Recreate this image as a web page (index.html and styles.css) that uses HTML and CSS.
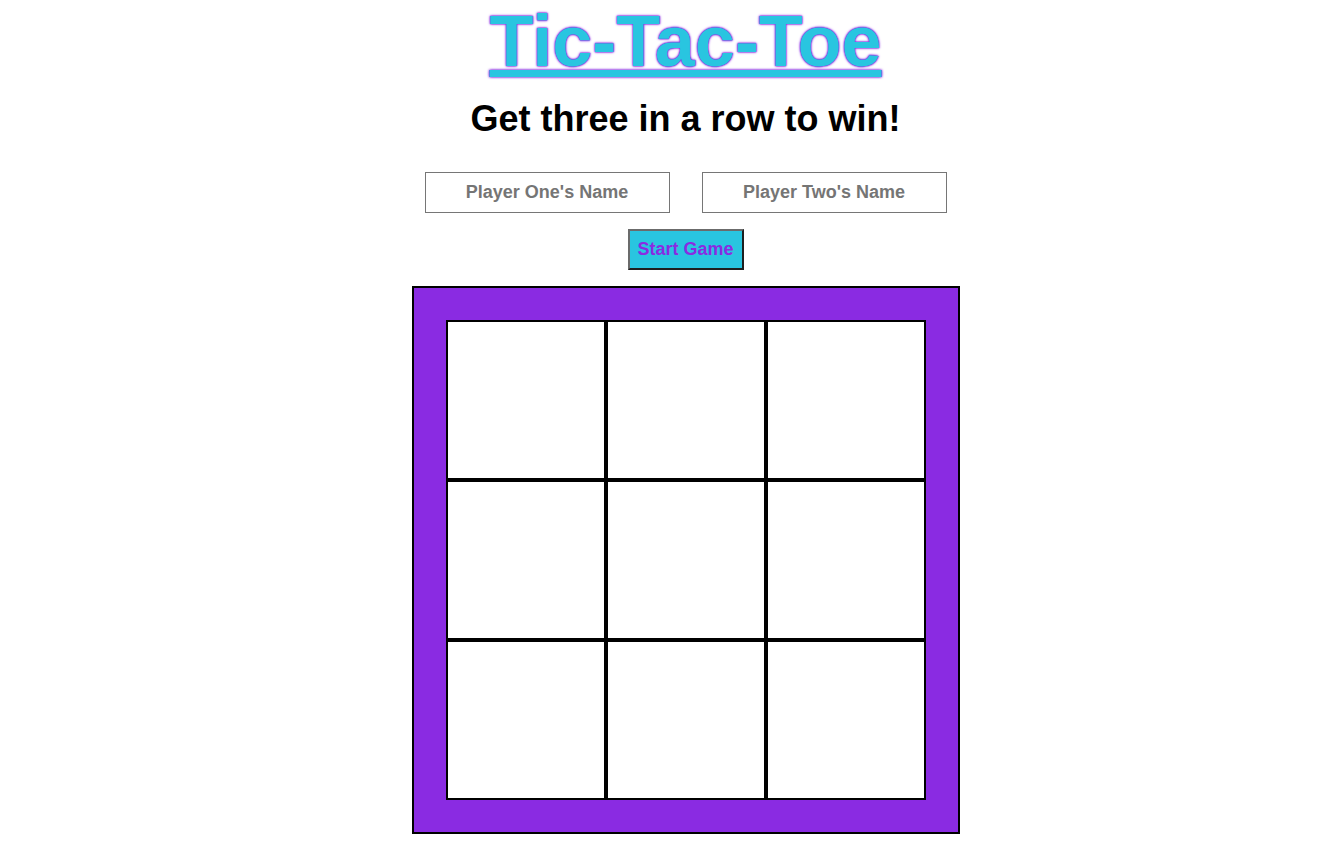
FILE: index.html
```html
<!DOCTYPE html>
<html lang="en">
<head>
<meta charset="utf-8">
<title>Tic-Tac-Toe</title>
<link rel="stylesheet" href="styles.css">
</head>
<body>
<main class="page">
  <h1 class="title">Tic-Tac-Toe</h1>
  <h2 class="subtitle">Get three in a row to win!</h2>
  <div class="players">
    <input class="name-input" type="text" placeholder="Player One's Name">
    <input class="name-input" type="text" placeholder="Player Two's Name">
  </div>
  <button class="start-btn" type="button">Start Game</button>
  <div class="board">
    <div class="grid">
      <div class="cell"></div>
      <div class="cell"></div>
      <div class="cell"></div>
      <div class="cell"></div>
      <div class="cell"></div>
      <div class="cell"></div>
      <div class="cell"></div>
      <div class="cell"></div>
      <div class="cell"></div>
    </div>
  </div>
</main>
</body>
</html>
```
FILE: styles.css
```css
html, body {
  margin: 0;
  padding: 0;
  background: #ffffff;
}

body {
  font-family: "Liberation Sans", Arial, sans-serif;
  padding-left: 47px;
}

.page {
  display: flex;
  flex-direction: column;
  align-items: center;
}

.title {
  margin: 0;
  font-size: 72px;
  font-weight: 700;
  color: #29c5e0;
  text-decoration: underline;
  text-shadow: 0 0 1px #8a2be2, 0 0 1px #8a2be2, 0 0 2px #8a2be2, 0 0 3px #8a2be2;
}

.subtitle {
  margin: 16px 0 0;
  font-size: 36px;
  font-weight: 700;
  color: #000000;
}

.players {
  display: flex;
  gap: 32px;
  margin-top: 32px;
}

.name-input {
  width: 245px;
  height: 41px;
  box-sizing: border-box;
  border: 1px solid #767676;
  border-radius: 0;
  padding: 0 8px;
  font-family: "Liberation Sans", Arial, sans-serif;
  font-size: 18px;
  font-weight: 700;
  text-align: center;
  color: #333333;
  background: #ffffff;
}

.name-input::placeholder {
  color: #757575;
  opacity: 1;
}

.start-btn {
  margin-top: 16px;
  width: 116px;
  height: 41px;
  box-sizing: border-box;
  padding: 0;
  border: 2px solid;
  border-color: #6b6b6b #1f1f1f #1f1f1f #6b6b6b;
  background: #29c5e0;
  color: #8a2be2;
  font-family: "Liberation Sans", Arial, sans-serif;
  font-size: 18px;
  font-weight: 700;
}

.board {
  margin-top: 16px;
  padding: 32px;
  border: 2px solid #000000;
  background: #8a2be2;
}

.grid {
  display: grid;
  grid-template-columns: repeat(3, 160px);
  grid-template-rows: repeat(3, 160px);
}

.cell {
  box-sizing: border-box;
  border: 2px solid #000000;
  background: #ffffff;
}
```
